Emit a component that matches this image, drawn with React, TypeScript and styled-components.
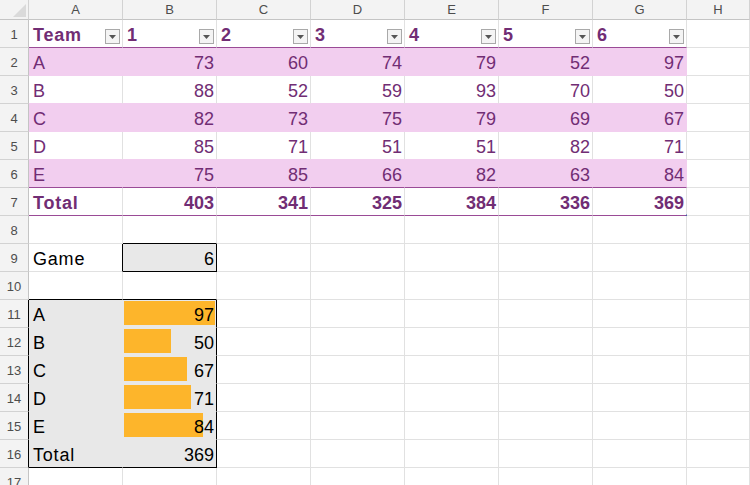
import React from "react";
import styled, { createGlobalStyle } from "styled-components";

const Global = createGlobalStyle`
  html, body { margin: 0; padding: 0; background: #ffffff; overflow: hidden; }
  * { box-sizing: border-box; }
`;

const GRID = "#e1e1e1";
const HEAD_LINE = "#d2d2d2";
const PURPLE_TEXT = "#712d74";
const PURPLE_LINE = "#9a4b96";
const PINK = "#f2ceef";
const GREY = "#e8e8e8";
const BAR = "#fdb52b";

const Sheet = styled.div`
  display: grid;
  grid-template-columns: 29px repeat(7, 94px) 1fr;
  grid-template-rows: 20px repeat(17, 28px);
  width: 750px;
  height: 485px;
  overflow: hidden;
  font-family: "Liberation Sans", Arial, sans-serif;
`;

const Corner = styled.div`
  background: #f3f3f3;
  border-right: 1px solid ${HEAD_LINE};
  border-bottom: 1px solid #c4c4c4;
  display: flex;
  align-items: flex-end;
  justify-content: flex-end;
  padding: 0 2px 2px 0;
`;

const ColHead = styled.div`
  background: #f3f3f3;
  border-right: 1px solid ${HEAD_LINE};
  border-bottom: 1px solid #c4c4c4;
  color: #4d4d4d;
  font-size: 13px;
  line-height: 19px;
  text-align: center;
`;

const RowHead = styled.div<{ $rb?: string }>`
  background: #f3f3f3;
  border-right: 1px solid ${(p) => p.$rb || "#c4c4c4"};
  border-bottom: 1px solid ${HEAD_LINE};
  color: #4d4d4d;
  font-size: 13px;
  line-height: 27px;
  padding-top: 1px;
  text-align: center;
  overflow: hidden;
`;

const Cell = styled.div<{
  $fill?: string;
  $rb?: string;
  $bb?: string;
  $color?: string;
  $bold?: boolean;
  $align?: "left" | "right";
}>`
  position: relative;
  background: ${(p) => p.$fill || "#ffffff"};
  border-right: 1px solid ${(p) => p.$rb || p.$fill || GRID};
  border-bottom: 1px solid ${(p) => p.$bb || p.$fill || GRID};
  color: ${(p) => p.$color || "#000000"};
  font-weight: ${(p) => (p.$bold ? 700 : 400)};
  font-size: 18px;
  line-height: 23px;
  padding: 4px 2px 0 4px;
  text-align: ${(p) => p.$align || "left"};
  letter-spacing: ${(p) => (p.$align === "right" ? "0" : "0.8px")};
  white-space: nowrap;
`;

const HeaderCell = styled(Cell)`
  display: flex;
  justify-content: space-between;
  padding-right: 2px;
`;

const FilterButton = styled.span`
  align-self: flex-end;
  margin-bottom: 3px;
  width: 15px;
  height: 15px;
  border: 1px solid #a9a9a9;
  background: #f4f4f4;
  display: flex;
  align-items: center;
  justify-content: center;
  flex: none;
`;

const Handle = styled.span`
  position: absolute;
  right: -2px;
  bottom: -2px;
  width: 0;
  height: 0;
  border-left: 4px solid transparent;
  border-bottom: 4px solid #4b5aa8;
`;

const Bar = styled.span`
  position: absolute;
  left: 1px;
  top: 1px;
  height: 24px;
  background: ${BAR};
`;

const Value = styled.span`
  position: relative;
`;

const Filter = () => (
  <FilterButton>
    <svg width="7" height="4" viewBox="0 0 7 4">
      <polygon points="0,0 7,0 3.5,4" fill="#555" />
    </svg>
  </FilterButton>
);

const cols = ["A", "B", "C", "D", "E", "F", "G", "H"];
const data: [string, ...number[]][] = [
  ["A", 73, 60, 74, 79, 52, 97],
  ["B", 88, 52, 59, 93, 70, 50],
  ["C", 82, 73, 75, 79, 69, 67],
  ["D", 85, 71, 51, 51, 82, 71],
  ["E", 75, 85, 66, 82, 63, 84],
];
const totals = [403, 341, 325, 384, 336, 369];
const game = 6;
const gameValues = data.map((r) => ({ team: r[0], v: r[game] as number }));
const maxV = Math.max(...gameValues.map((g) => g.v));

export default function App() {
  const cells: React.ReactNode[] = [];

  cells.push(
    <Corner key="corner">
      <svg width="13" height="13" viewBox="0 0 13 13">
        <polygon points="13,0 13,13 0,13" fill="#dadada" />
      </svg>
    </Corner>
  );
  cols.forEach((c) => cells.push(<ColHead key={"ch" + c}>{c}</ColHead>));

  // Row 1 - table header
  cells.push(<RowHead key="r1">1</RowHead>);
  ["Team", "1", "2", "3", "4", "5", "6"].forEach((h, i) =>
    cells.push(
      <HeaderCell key={"h" + i} $bb={PURPLE_LINE} $color={PURPLE_TEXT} $bold>
        <span>{h}</span>
        <Filter />
      </HeaderCell>
    )
  );
  cells.push(<Cell key="h-h" />);

  // Rows 2-6
  data.forEach((row, ri) => {
    const pink = ri % 2 === 0;
    const last = ri === data.length - 1;
    const bb = last ? PURPLE_LINE : pink ? undefined : PINK;
    cells.push(<RowHead key={"rn" + ri}>{ri + 2}</RowHead>);
    row.forEach((v, ci) =>
      cells.push(
        <Cell
          key={`d${ri}-${ci}`}
          $fill={pink ? PINK : undefined}
          $bb={bb}
          $color={PURPLE_TEXT}
          $align={ci === 0 ? "left" : "right"}
        >
          {v}
        </Cell>
      )
    );
    cells.push(<Cell key={"dh" + ri} />);
  });

  // Row 7 - totals
  cells.push(<RowHead key="r7">7</RowHead>);
  cells.push(
    <Cell key="t0" $bb={PURPLE_LINE} $color={PURPLE_TEXT} $bold>
      Total
    </Cell>
  );
  totals.forEach((t, i) =>
    cells.push(
      <Cell key={"t" + (i + 1)} $bb={PURPLE_LINE} $color={PURPLE_TEXT} $bold $align="right">
        {t}
        {i === totals.length - 1 && <Handle />}
      </Cell>
    )
  );
  cells.push(<Cell key="th" />);

  // Row 8
  cells.push(<RowHead key="r8">8</RowHead>);
  cols.forEach((c) => cells.push(<Cell key={"e8" + c} $bb={c === "B" ? "#000" : undefined} />));

  // Row 9 - Game
  cells.push(<RowHead key="r9">9</RowHead>);
  cells.push(
    <Cell key="g0" $rb="#000">
      Game
    </Cell>
  );
  cells.push(
    <Cell key="g1" $fill={GREY} $rb="#000" $bb="#000" $align="right">
      {game}
    </Cell>
  );
  cols.slice(2).forEach((c) => cells.push(<Cell key={"g" + c} />));

  // Row 10
  cells.push(<RowHead key="r10">10</RowHead>);
  cols.forEach((c) =>
    cells.push(<Cell key={"e10" + c} $bb={c === "A" || c === "B" ? "#000" : undefined} />)
  );

  // Rows 11-16
  const lower: { label: string; v: number; bar: boolean }[] = [
    ...gameValues.map((g) => ({ label: g.team, v: g.v, bar: true })),
    { label: "Total", v: totals[game - 1], bar: false },
  ];
  lower.forEach((r, i) => {
    const last = i === lower.length - 1;
    cells.push(
      <RowHead key={"lr" + i} $rb="#000">
        {11 + i}
      </RowHead>
    );
    cells.push(
      <Cell key={"la" + i} $fill={GREY} $bb={last ? "#000" : undefined}>
        {r.label}
      </Cell>
    );
    cells.push(
      <Cell key={"lb" + i} $fill={GREY} $rb="#000" $bb={last ? "#000" : undefined} $align="right">
        {r.bar && <Bar style={{ width: `${(r.v / maxV) * 91}px` }} />}
        <Value>{r.v}</Value>
      </Cell>
    );
    cols.slice(2).forEach((c) => cells.push(<Cell key={`l${i}${c}`} />));
  });

  // Row 17
  cells.push(<RowHead key="r17">17</RowHead>);
  cols.forEach((c) => cells.push(<Cell key={"e17" + c} />));

  return (
    <>
      <Global />
      <Sheet>{cells}</Sheet>
    </>
  );
}
